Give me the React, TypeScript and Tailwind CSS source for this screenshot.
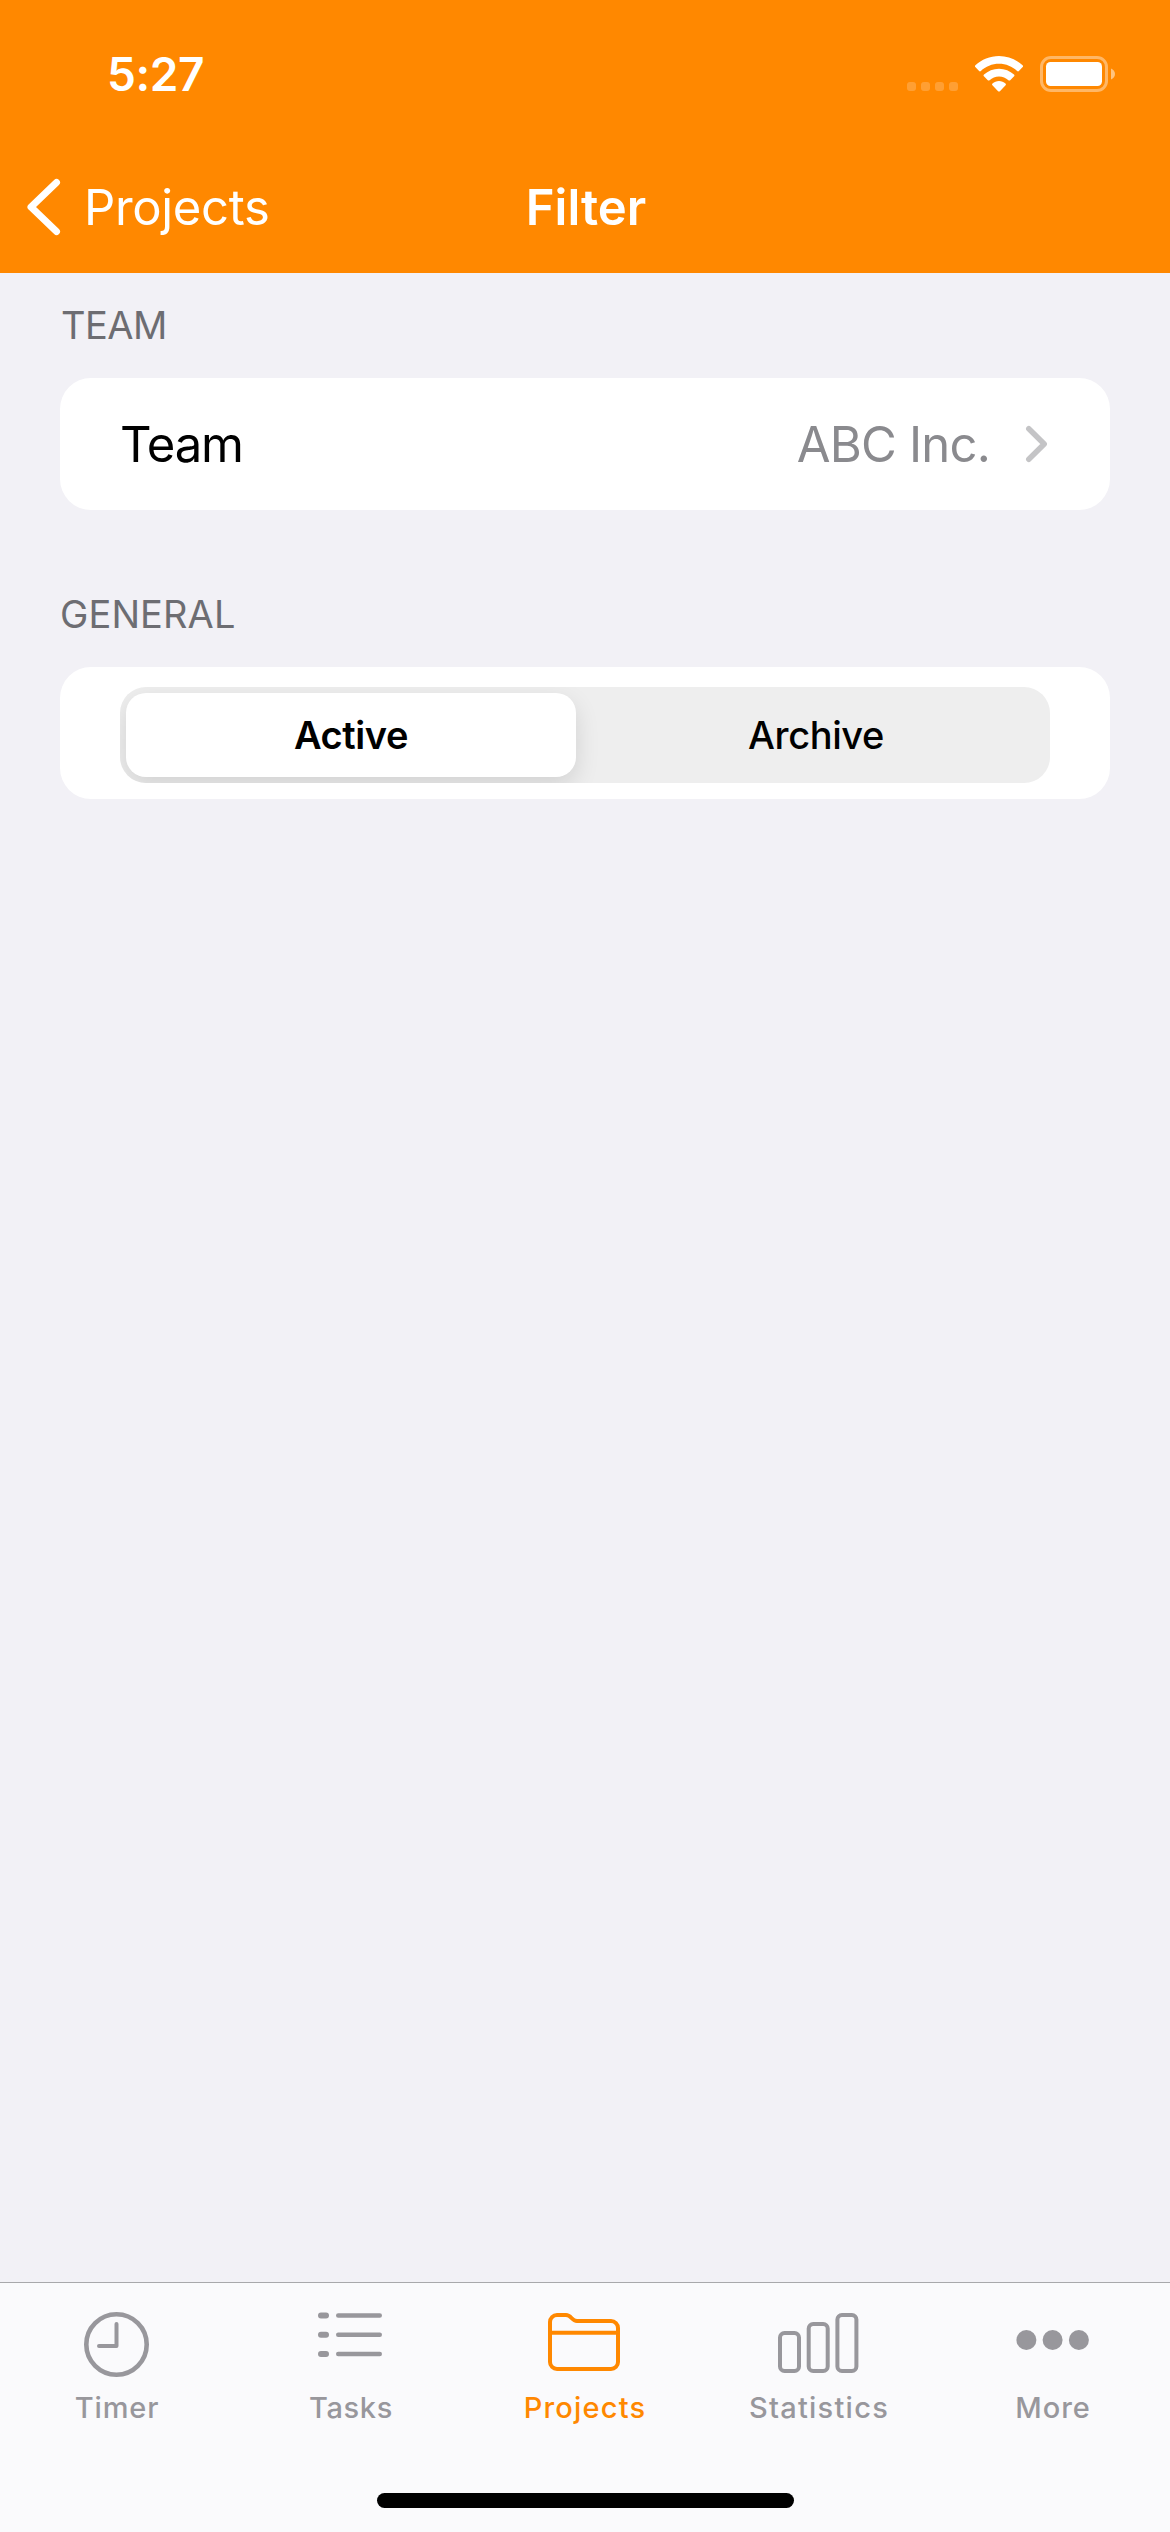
import { useState } from "react";
import type { ReactNode } from "react";

// === ICONS ===
const WifiIcon = () => (
  <svg width="50" height="38" viewBox="0 0 50 38" fill="#fff">
    <path d="M25 1C34 1 42.500 4.500 48.600 10.300C49.200 10.900 49.200 11.600 48.700 12.100L44.900 16C44.400 16.500 43.700 16.500 43.100 16C38.300 11.500 32 8.800 25 8.800S11.700 11.500 6.900 16C6.300 16.500 5.600 16.500 5.100 16L1.300 12.100C.8 11.600.8 10.900 1.400 10.300C7.500 4.500 16 1 25 1Z" />
    <path d="M25 13.700C30.800 13.700 36 15.900 40 19.500C40.600 20.100 40.600 20.800 40.100 21.300L36.200 25.200C35.700 25.700 35 25.700 34.400 25.200C31.900 22.900 28.600 21.500 25 21.500S18.100 22.900 15.600 25.200C15 25.700 14.300 25.700 13.800 25.200L9.900 21.300C9.400 20.800 9.400 20.100 10 19.500C14 15.900 19.200 13.700 25 13.700Z" />
    <path d="M25 26C27.500 26 29.700 26.900 31.500 28.400C32.100 28.900 32.100 29.600 31.600 30.200L25.900 36.200C25.400 36.700 24.600 36.700 24.100 36.200L18.400 30.200C17.900 29.600 17.900 28.900 18.500 28.400C20.300 26.900 22.500 26 25 26Z" />
  </svg>
);

const BatteryIcon = () => (
  <svg width="76" height="36" viewBox="0 0 76 36" fill="none">
    <rect x="1.500" y="1.500" width="65" height="33" rx="9.500" stroke="#fff" strokeOpacity="0.4" strokeWidth="3" />
    <rect x="6" y="6" width="56" height="24" rx="4.500" fill="#fff" />
    <path d="M71 12.500C73.500 13.400 75 15.500 75 18S73.500 22.600 71 23.500Z" fill="#fff" fillOpacity="0.5" />
  </svg>
);

const TimerIcon = () => (
  <svg className="overflow-visible" width="78" height="72" viewBox="0 0 78 72" fill="none" stroke="currentColor" strokeLinecap="round" strokeLinejoin="round">
    <circle cx="38.500" cy="40.500" r="30.200" strokeWidth="4.600" />
    <path d="M38.500 20V42H21" strokeWidth="4" />
  </svg>
);

const TasksIcon = () => (
  <svg width="78" height="72" viewBox="0 0 78 72" fill="none" stroke="currentColor" strokeLinecap="round">
    <path d="M9 11.500h5M9 30.800h5M9 50h5" strokeWidth="6" />
    <path d="M26.200 11.500H67.800M26.200 30.800H67.800M26.200 50H67.800" strokeWidth="4.400" />
  </svg>
);

const FolderIcon = () => (
  <svg width="78" height="72" viewBox="0 0 78 72" fill="none" stroke="currentColor" strokeWidth="4" strokeLinejoin="round">
    <path d="M4 18a7 7 0 0 1 7-7h9c5.500 0 5.500 6 11 6h34a7 7 0 0 1 7 7v34a7 7 0 0 1-7 7H11a7 7 0 0 1-7-7Z" />
    <path d="M4 28.800H72" />
  </svg>
);

const StatsIcon = () => (
  <svg width="84" height="72" viewBox="0 0 84 72" fill="none" stroke="currentColor" strokeWidth="4">
    <rect x="3" y="29" width="19" height="38" rx="4.500" />
    <rect x="31.700" y="20" width="19" height="47" rx="4.500" />
    <rect x="60.400" y="11" width="19" height="56" rx="4.500" />
  </svg>
);

const MoreIcon = () => (
  <svg width="78" height="72" viewBox="0 0 78 72" fill="currentColor">
    <circle cx="12.400" cy="36" r="10" />
    <circle cx="38.600" cy="36" r="10" />
    <circle cx="64.900" cy="36" r="10" />
  </svg>
);

const tabs: { name: string; icon: ReactNode; text: string }[] = [
  { name: "Timer", icon: <TimerIcon />, text: "tracking-[0.9px]" },
  { name: "Tasks", icon: <TasksIcon />, text: "tracking-[0.65px]" },
  { name: "Projects", icon: <FolderIcon />, text: "tracking-[1.2px]" },
  { name: "Statistics", icon: <StatsIcon />, text: "tracking-[1.25px]" },
  { name: "More", icon: <MoreIcon />, text: "tracking-[0.95px]" },
];

export default function App() {
  const [segment, setSegment] = useState("Active");
  const [tab, setTab] = useState("Projects");

  const thumb = "bg-white font-semibold tracking-[-0.4px] shadow-[0_9px_24px_rgba(0,0,0,0.12)]";
  const plain = "font-[450] tracking-[-0.4px]";

  return (
    <div className="flex h-[2532px] w-[1170px] flex-col overflow-hidden bg-[#f2f1f6] font-['Inter','Liberation_Sans',sans-serif] text-black">
      <header className="h-[273px] bg-[#ff8800] text-white">
        {/* Status bar */}
        <div className="flex h-[149px] items-center justify-between pr-[54px] pl-[107px]">
          <span className="text-[46px] font-semibold tracking-[-0.4px]">5:27</span>
          <div className="mb-[2px] flex items-center">
            <div className="mt-[25px] mr-[16px] flex gap-[5px]">
              <i className="size-[9px] rounded-[3px] bg-white/20" />
              <i className="size-[9px] rounded-[3px] bg-white/20" />
              <i className="size-[9px] rounded-[3px] bg-white/20" />
              <i className="size-[9px] rounded-[3px] bg-white/20" />
            </div>
            <WifiIcon />
            <div className="mt-px ml-[16px]">
              <BatteryIcon />
            </div>
          </div>
        </div>

        {/* Nav bar */}
        <nav className="grid h-[116px] grid-cols-3 items-center">
          <button className="flex items-center pl-[24px]">
            <svg width="40" height="60" viewBox="0 0 40 60" fill="none" stroke="#fff" strokeWidth="7" strokeLinecap="round" strokeLinejoin="round">
              <path d="M32.500 5.500L7 30L32.500 54.500" />
            </svg>
            <span className="mt-[2px] ml-[20px] text-[49px] tracking-[-0.33px]">Projects</span>
          </button>
          <h1 className="pt-[2px] pl-[2px] text-center text-[49px] font-semibold">Filter</h1>
        </nav>
      </header>

      <main className="flex-1 px-[60px] pt-[29px]">
        <h2 className="pl-px text-[38px] leading-[47px] tracking-[-0.5px] text-[#6d6d72]">TEAM</h2>
        <div className="mt-[29px] flex h-[132px] items-center rounded-[31px] bg-white px-[60px] pt-[2px] text-[49px]">
          <span className="tracking-[-1.1px]">Team</span>
          <span className="ml-auto tracking-[-0.8px] text-[#8a8a8e]">ABC Inc.</span>
          <svg className="mb-[2px] ml-[30px]" width="30" height="44" viewBox="0 0 30 44" fill="none" stroke="#c4c4c6" strokeWidth="5.500" strokeLinecap="round" strokeLinejoin="round">
            <path d="M8.800 6.700L24.200 22L8.800 37.300" />
          </svg>
        </div>

        <h2 className="mt-[81px] text-[38px] leading-[47px] tracking-[0.1px] text-[#6d6d72]">GENERAL</h2>
        <div className="mt-[29px] h-[132px] rounded-[31px] bg-white px-[60px] pt-[20px]">
          <div className="grid h-[96px] grid-cols-2 overflow-hidden rounded-[26px] bg-[#eeeeee] text-[38px]">
            {["Active", "Archive"].map((name) => (
              <div key={name} className="flex items-center px-[6px]">
                <button
                  onClick={() => setSegment(name)}
                  className={`h-[84px] w-[450px] rounded-[20px] ${segment === name ? thumb : plain}`}
                >
                  {name}
                </button>
              </div>
            ))}
          </div>
        </div>
      </main>

      {/* Tab bar */}
      <footer className="flex h-[250px] flex-col items-center border-t border-[#a8a8ab] bg-[#fafafc] pt-[21px] pb-[24px]">
        <div className="grid w-full grid-cols-5">
          {tabs.map((t) => (
            <button
              key={t.name}
              onClick={() => setTab(t.name)}
              className={`flex flex-col items-center ${tab === t.name ? "text-[#ff8800]" : "text-[#98979c]"}`}
            >
              {t.icon}
              <span className={`mt-[14px] text-[29px] leading-[36px] font-[450] ${t.text}`}>{t.name}</span>
            </button>
          ))}
        </div>
        <div className="mt-auto h-[15px] w-[417px] rounded-full bg-black" />
      </footer>
    </div>
  );
}
